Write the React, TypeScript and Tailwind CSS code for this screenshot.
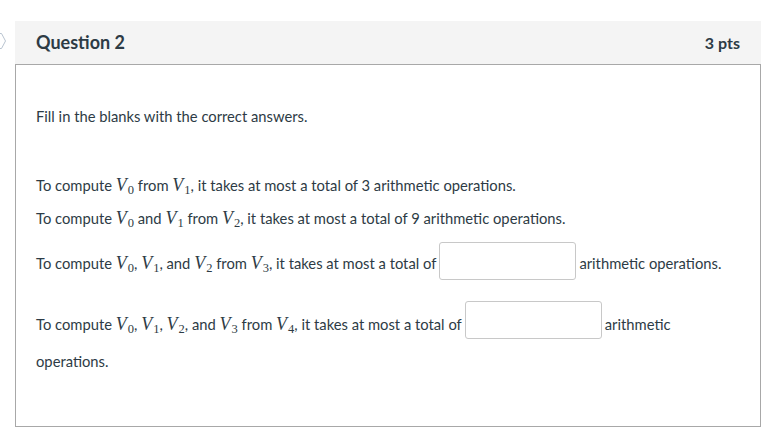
import React from "react";

const V = ({ n }: { n: string }) => (
  <span className="whitespace-nowrap" style={{ fontFamily: '"Liberation Serif", "DejaVu Serif", serif' }}>
    <span className="italic text-[18px]">V</span>
    <span className="text-[12.5px] relative top-[3px] ml-[1px]">{n}</span>
  </span>
);

const Box = () => (
  <span className="inline-block w-[137px] h-[38px] border border-[#c8c8c8] rounded-[3px] bg-white mx-[3px] shrink-0" />
);

export default function App() {
  return (
    <div
      className="relative w-[784px] h-[446px] bg-white text-[#2d3b45] text-[14.75px]"
      style={{ fontFamily: 'Lato, "Liberation Sans", sans-serif' }}
    >
      <svg className="absolute left-0 top-[32px]" width="8" height="18" viewBox="0 0 8 18">
        <path d="M-1 1.5 L1.5 1.5 L5.5 9 L1.5 16.5 L-1 16.5" fill="none" stroke="#b9c4d0" strokeWidth="1" />
      </svg>
      <div className="pt-[21px] pl-[15px]">
        <div className="w-[746px] h-[406px] border border-[#a8a8a8] flex flex-col">
          <div className="h-[44px] -mt-px -mx-px px-[21px] bg-[#f4f4f4] border-b border-[#a8a8a8] flex items-center justify-between">
            <span className="text-[18px] font-bold text-[#2d3b45]">Question 2</span>
            <span className="text-[16px] font-bold text-[#2d3b45]">3 pts</span>
          </div>
          <div className="pl-[20px] pt-[41px]">
            <div className="h-[20px] leading-[20px]">Fill in the blanks with the correct answers.</div>
            <div className="mt-[49px] h-[20px] leading-[20px] whitespace-nowrap">
              To compute <V n="0" /> from <V n="1" />, it takes at most a total of 3 arithmetic operations.
            </div>
            <div className="mt-[13px] h-[20px] leading-[20px] whitespace-nowrap">
              To compute <V n="0" /> and <V n="1" /> from <V n="2" />, it takes at most a total of 9 arithmetic operations.
            </div>
            <div className="mt-[14px] h-[38px] flex items-center whitespace-nowrap">
              <span className="pt-[5px]">
                To compute <V n="0" />, <V n="1" />, and <V n="2" /> from <V n="3" />, it takes at most a total of
              </span>
              <Box />
              <span className="pt-[5px]">arithmetic operations.</span>
            </div>
            <div className="mt-[21px] h-[38px] flex items-center whitespace-nowrap">
              <span className="pt-[8px]">
                To compute <V n="0" />, <V n="1" />, <V n="2" />, and <V n="3" /> from <V n="4" />, it takes at most a total of
              </span>
              <Box />
              <span className="pt-[8px]">arithmetic</span>
            </div>
            <div className="mt-[12px] h-[20px] leading-[20px]">operations.</div>
          </div>
        </div>
      </div>
    </div>
  );
}
